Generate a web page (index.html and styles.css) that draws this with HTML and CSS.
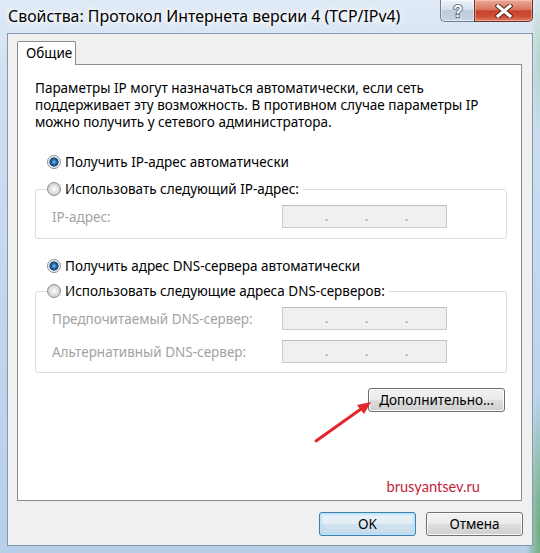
FILE: index.html
```html
<!DOCTYPE html>
<html lang="ru">
<head>
<meta charset="utf-8">
<title>Свойства: Протокол Интернета версии 4 (TCP/IPv4)</title>
<link rel="stylesheet" href="styles.css">
</head>
<body>
<div class="window">
  <div class="titlebar">
    <div class="title">Свойства: Протокол Интернета версии 4 (TCP/IPv4)</div>
    <div class="caption">
      <div class="cbtn help">
        <svg width="16" height="18" viewBox="0 0 16 18"><text x="8" y="15" text-anchor="middle" font-family="Liberation Sans, sans-serif" font-weight="bold" font-size="16" fill="#ffffff" stroke="#4a5a70" stroke-width="1.6" paint-order="stroke">?</text></svg>
      </div>
      <div class="cbtn close">
        <svg width="18" height="14" viewBox="0 0 18 14">
          <path d="M3 2 L15 12 M15 2 L3 12" stroke="#5a2a22" stroke-width="5" stroke-linecap="square" fill="none"/>
          <path d="M3 2 L15 12 M15 2 L3 12" stroke="#ffffff" stroke-width="3" stroke-linecap="square" fill="none"/>
        </svg>
      </div>
    </div>
  </div>
  <div class="client">
    <div class="tabs"><div class="tab">Общие</div></div>
    <div class="panel">
      <p class="desc">Параметры IP могут назначаться автоматически, если сеть<br>поддерживает эту возможность. В противном случае параметры IP<br>можно получить у сетевого администратора.</p>

      <div class="radio r1"><span class="rb on"></span>Получить IP-адрес автоматически</div>
      <fieldset class="group g1">
        <legend class="radio"><span class="rb"></span>Использовать следующий IP-адрес:</legend>
        <div class="row"><span class="lbl">IP-адрес:</span><span class="ipbox"><i>.</i><i>.</i><i>.</i></span></div>
      </fieldset>

      <div class="radio r3"><span class="rb on"></span>Получить адрес DNS-сервера автоматически</div>
      <fieldset class="group g2">
        <legend class="radio"><span class="rb"></span>Использовать следующие адреса DNS-серверов:</legend>
        <div class="row"><span class="lbl">Предпочитаемый DNS-сервер:</span><span class="ipbox"><i>.</i><i>.</i><i>.</i></span></div>
        <div class="row row2"><span class="lbl">Альтернативный DNS-сервер:</span><span class="ipbox"><i>.</i><i>.</i><i>.</i></span></div>
      </fieldset>

      <div class="advrow"><button class="btn adv">Дополнительно...</button></div>
      <div class="mark">brusyantsev.ru</div>
    </div>
    <div class="actions">
      <button class="btn ok">OK</button>
      <button class="btn">Отмена</button>
    </div>
  </div>
  <svg class="arrow" width="540" height="553" viewBox="0 0 540 553">
    <line x1="316" y1="441" x2="361" y2="409" stroke="#e3262b" stroke-width="3" stroke-linecap="round"/>
    <polygon points="371,402 364,414 357,405" fill="#e3262b"/>
  </svg>
</div>
</body>
</html>
```
FILE: styles.css
```css
* { box-sizing: border-box; }
html, body { margin: 0; padding: 0; }
body {
  width: 540px;
  height: 553px;
  overflow: hidden;
  font-family: "Noto Sans", "Open Sans", sans-serif;
  font-size: 13.5px;
  color: #000;
}
.window {
  position: relative;
  width: 540px;
  height: 553px;
  background:
    radial-gradient(ellipse 14px 140px at 540px 530px, rgba(80, 160, 80, 0.75), rgba(80, 160, 80, 0)),
    radial-gradient(ellipse 10px 80px at 540px 60px, rgba(150, 200, 150, 0.5), rgba(150, 200, 150, 0)),
    linear-gradient(180deg, #dfeaf6 0%, #cfdff1 15%, #c2d7ee 55%, #b8cfe9 100%);
}
.titlebar {
  height: 33px;
  display: flex;
  justify-content: space-between;
  align-items: flex-start;
  padding: 0 7px 0 8px;
}
.title {
  font-size: 15.9px;
  line-height: 20px;
  padding-top: 6px;
  white-space: nowrap;
  text-shadow: 0 0 8px #fff, 0 0 8px #fff, 0 0 4px #fff;
}
.caption { display: flex; }
.cbtn {
  height: 22px;
  display: flex;
  align-items: center;
  justify-content: center;
}
.help {
  width: 34px;
  border: 1px solid #6d7e94;
  border-top: none;
  border-right: none;
  border-radius: 0 0 0 5px;
  background: linear-gradient(180deg, #eef3f9 0%, #d6e0ec 45%, #bccbdd 50%, #c6d4e4 100%);
  box-shadow: inset 0 0 0 1px rgba(255,255,255,0.5);
}
.close {
  width: 59px;
  border: 1px solid #6e3026;
  border-top: none;
  border-radius: 0 0 5px 0;
  background: linear-gradient(180deg, #eaa999 0%, #d9775f 45%, #c6422c 52%, #cf4e36 80%, #de8266 100%);
  box-shadow: inset 0 0 0 1px rgba(255,220,210,0.45);
}
.client {
  margin-left: 7px;
  width: 526px;
  height: 513px;
  background: #f0f0f0;
  border: 1px solid #8797ab;
  padding: 7px 9px 0 9px;
}
.tabs { display: flex; height: 23px; }
.tab {
  position: relative;
  z-index: 1;
  width: 59px;
  height: 24px;
  background: #fff;
  border: 1px solid #898c95;
  border-bottom: none;
  padding-left: 8px;
  line-height: 22px;
  border-radius: 2px 2px 0 0;
}
.panel {
  width: 505px;
  height: 437px;
  background: #fff;
  border: 1px solid #898c95;
  padding: 15px 14px 0 17px;
}
.desc { margin: 0; line-height: 17px; white-space: nowrap; }
.radio {
  display: flex;
  align-items: center;
  gap: 4px;
  height: 20px;
  white-space: nowrap;
}
.r1, .r3 { padding-left: 12px; }
.r1 { margin-top: 21px; }
.r3 { margin-top: 17px; }
.rb {
  flex: none;
  width: 14px;
  height: 14px;
  border-radius: 50%;
  border: 1px solid #8e8f8f;
  background: radial-gradient(circle, #fdfdfd 0, #f0f0f0 2px, #d8d8d8 5px, #c6c6c6 7px);
}
.rb.on {
  background: radial-gradient(circle at 50% 50%, #9bd7f7 0, #2c7cc0 1.8px, #154a7d 3.8px, #0f3c66 4.2px, #e6e6e6 4.9px, #f7f7f7 5.6px, #d0d0d0 7px);
}
.group {
  margin: 7px 0 0;
  padding: 0 0 10px;
  border: 1px solid #d5dfe5;
  border-radius: 3px;
  min-width: 0;
}
.g2 { margin-top: 5px; padding-bottom: 9px; }
.group legend {
  margin-left: 11px;
  padding: 0 4px 0 0;
}
.row {
  display: grid;
  grid-template-columns: 230px 165px;
  align-items: center;
  margin-top: 6px;
  padding-left: 16px;
}
.row2 { margin-top: 10px; }
.lbl { color: #a3a3a3; white-space: nowrap; }
.ipbox {
  height: 23px;
  background: #f0f0f0;
  border: 1px solid #cbcbcb;
  border-top-color: #bdbdbd;
  padding-left: 42px;
  display: flex;
  align-items: flex-end;
  padding-bottom: 4px;
  font-size: 12px;
  line-height: 12px;
  color: #8a8a8a;
}
.ipbox i { font-style: normal; width: 40px; }
.btn {
  font-family: inherit;
  font-size: 13.5px;
  color: #000;
  height: 24px;
  width: 97px;
  padding: 0;
  border: 1px solid #707070;
  border-radius: 3px;
  background: linear-gradient(180deg, #f2f2f2 0%, #ebebeb 48%, #dddddd 52%, #cfcfcf 100%);
  box-shadow: inset 0 0 0 1px #fbfbfb;
}
.advrow { display: flex; justify-content: flex-end; margin-top: 15px; padding-right: 2px; }
.adv { width: 137px; }
.mark {
  margin-top: 65px;
  height: 20px;
  line-height: 20px;
  text-align: right;
  padding-right: 27px;
  font-family: "Lato", "Liberation Sans", sans-serif;
  font-size: 14.6px;
  color: #c41e3a;
}
.actions {
  display: flex;
  justify-content: flex-end;
  gap: 10px;
  margin-top: 11px;
}
.ok {
  border-color: #3c7fb1;
  box-shadow: inset 0 0 0 1px #bfe4f7, inset 0 0 2px 2px rgba(168, 218, 245, 0.6);
  background: linear-gradient(180deg, #eaf4fa 0%, #e2edf5 48%, #d2e3ef 52%, #c6dbeb 100%);
}
.arrow {
  position: absolute;
  left: 0;
  top: 0;
  pointer-events: none;
}
```
